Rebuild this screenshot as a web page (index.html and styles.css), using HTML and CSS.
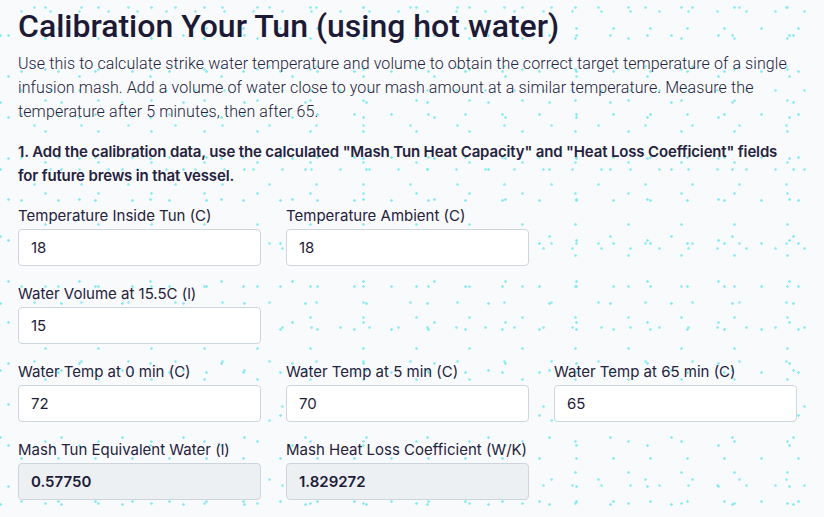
FILE: index.html
```html
<!DOCTYPE html>
<html>
<head>
<meta charset="utf-8">
<link rel="stylesheet" href="styles.css">
</head>
<body>
<main class="page">
  <h1 class="title">Calibration Your Tun (using hot water)</h1>
  <p class="intro">Use this to calculate strike water temperature and volume to obtain the correct target temperature of a single infusion mash. Add a volume of water close to your mash amount at a similar temperature. Measure the temperature after 5 minutes, then after 65.</p>
  <p class="step">1. Add the calibration data, use the calculated "Mash Tun Heat Capacity" and "Heat Loss Coefficient" fields for future brews in that vessel.</p>

  <div class="row first">
    <label class="field"><span class="label">Temperature Inside Tun (C)</span><input class="input" value="18"></label>
    <label class="field"><span class="label">Temperature Ambient (C)</span><input class="input" value="18"></label>
  </div>
  <div class="row">
    <label class="field"><span class="label">Water Volume at 15.5C (l)</span><input class="input" value="15"></label>
  </div>
  <div class="row">
    <label class="field"><span class="label">Water Temp at 0 min (C)</span><input class="input" value="72"></label>
    <label class="field"><span class="label">Water Temp at 5 min (C)</span><input class="input" value="70"></label>
    <label class="field"><span class="label">Water Temp at 65 min (C)</span><input class="input" value="65"></label>
  </div>
  <div class="row">
    <label class="field"><span class="label">Mash Tun Equivalent Water (l)</span><input class="input readonly" value="0.57750" readonly></label>
    <label class="field"><span class="label">Mash Heat Loss Coefficient (W/K)</span><input class="input readonly" value="1.829272" readonly></label>
  </div>
</main>
</body>
</html>
```
FILE: styles.css
```css
html, body {
  margin: 0;
  padding: 0;
}
body {
  background-color: #f9fafb;
  background-image:
    radial-gradient(circle, #7fecef 0.9px, transparent 1.6px),
    radial-gradient(circle, #86eef0 0.9px, transparent 1.6px),
    radial-gradient(circle, #7fecef 0.9px, transparent 1.6px),
    radial-gradient(circle, #8cf0f2 0.9px, transparent 1.6px),
    radial-gradient(circle, #7fecef 0.9px, transparent 1.6px),
    radial-gradient(circle, #8cf0f2 0.9px, transparent 1.6px);
  background-size: 37px 43px, 53px 31px, 61px 67px, 47px 59px, 71px 41px, 29px 79px;
  background-position: 3px 7px, 19px 23px, 31px 2px, 11px 37px, 44px 15px, 7px 51px;
  font-family: Inter, Roboto, "Noto Sans", sans-serif;
  color: #1e1c38;
  min-height: 517px;
}
.page {
  padding: 6px 28px 0 18px;
}
.title {
  margin: 0;
  font-family: Roboto, "Noto Sans", sans-serif;
  font-size: 32px;
  line-height: 40px;
  font-weight: 500;
  color: #1c1a36;
}
.intro {
  margin: 6px 0 0;
  font-family: Roboto, "Noto Sans", sans-serif;
  font-size: 16px;
  line-height: 24px;
  font-weight: 300;
  letter-spacing: 0.1px;
  color: #24223d;
}
.step {
  margin: 16px 0 0;
  font-size: 15px;
  line-height: 24px;
  font-weight: 600;
  letter-spacing: -0.15px;
  color: #24223d;
}
.row {
  display: grid;
  grid-template-columns: repeat(3, 243px);
  column-gap: 25px;
  margin-top: 18px;
}
.field {
  display: flex;
  flex-direction: column;
}
.label {
  font-size: 15px;
  line-height: 20px;
  margin-bottom: 3px;
  color: #24223d;
}
.input {
  box-sizing: border-box;
  height: 37px;
  width: 100%;
  margin: 0;
  border: 1px solid #cfd5dd;
  border-radius: 4px;
  background: #ffffff;
  padding: 0 12px;
  font-family: Inter, Roboto, "Noto Sans", sans-serif;
  font-size: 15px;
  color: #1e1c38;
}
.readonly {
  background: #ecf0f3;
  font-weight: 600;
}
```
